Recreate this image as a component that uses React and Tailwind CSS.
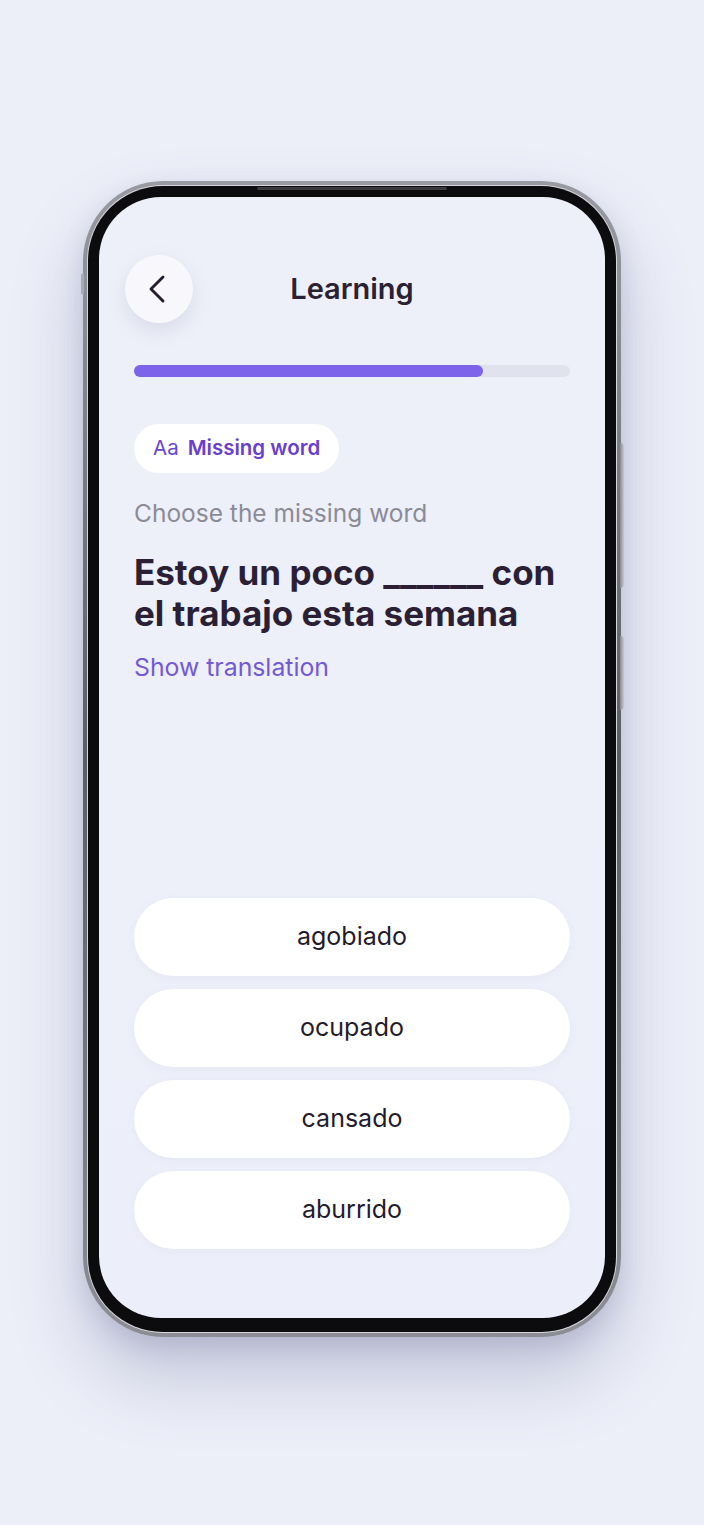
import React from 'react';
import { ChevronLeft } from 'lucide-react';

const options = ['agobiado', 'ocupado', 'cansado', 'aburrido'];

const progress = 80;

const App = () => {
  return (
    <div
      className="min-h-screen w-full bg-[#eceef8] pt-[181px] pb-[188px] flex justify-center"
      style={{ fontFamily: 'Inter, "Noto Sans", sans-serif' }}
    >
      <div className="relative">
        {/* side buttons */}
        <div className="absolute left-[-2px] top-[92px] w-[3px] h-[22px] rounded-l bg-[#a9a9b2]" />
        <div className="absolute right-[-3px] top-[262px] w-[4px] h-[145px] rounded-r bg-gradient-to-r from-[#8a8a92] to-[#c9c9d0]" />
        <div className="absolute right-[-3px] top-[455px] w-[4px] h-[74px] rounded-r bg-gradient-to-r from-[#8a8a92] to-[#c9c9d0]" />

        {/* Phone frame */}
        <div className="w-[538px] h-[1156px] rounded-[80px] p-[4px] bg-gradient-to-b from-[#9a9aa2] via-[#5c5c63] to-[#8d8d95] shadow-[0_40px_70px_rgba(90,95,140,0.28),0_10px_25px_rgba(90,95,140,0.18)]">
          <div className="w-full h-full rounded-[76px] p-[1px] bg-[#d6d6dc]">
            <div className="relative w-full h-full rounded-[75px] bg-[#0c0c0e] pt-[11px] px-[11px] pb-[14px]">
              <div className="absolute left-1/2 -translate-x-1/2 top-[1px] w-[190px] h-[3px] rounded-full bg-[#3a3a40]" />
              {/* Screen */}
              <div className="w-full h-full rounded-[62px] bg-gradient-to-b from-[#eef0f9] to-[#eceef9] flex flex-col px-[35px] pb-[69px] overflow-hidden">
                {/* Header */}
                <div className="relative mt-[58px] h-[68px] flex items-center justify-center">
                  <button className="absolute left-[-9px] top-0 w-[68px] h-[68px] rounded-full bg-[#f8f8fc] shadow-[0_8px_20px_rgba(100,100,140,0.15)] flex items-center justify-center">
                    <ChevronLeft size={48} strokeWidth={1.45} color="#261d2e" className="-ml-[4px]" />
                  </button>
                  <h1 className="text-[29px] font-semibold text-[#2b2134]">Learning</h1>
                </div>

                {/* Progress */}
                <div className="mt-[42px] h-[12px] w-full rounded-full bg-[#e0e2ee]">
                  <div className="h-full rounded-full bg-[#7c63e9]" style={{ width: `${progress}%` }} />
                </div>

                {/* Chip */}
                <div className="mt-[47px] self-start h-[49px] px-[19px] rounded-full bg-white flex items-center gap-[9px]">
                  <span className="text-[20.5px] text-[#6a45d0]">Aa</span>
                  <span className="text-[20.5px] font-semibold text-[#6a3fcf]">Missing word</span>
                </div>

                <p className="mt-[24px] text-[24.5px] leading-[32px] text-[#8b8b96]">Choose the missing word</p>

                <h2 className="mt-[23px] text-[35px] leading-[41px] font-bold text-[#2b1f36]">
                  Estoy un poco ______ con el trabajo esta semana
                </h2>

                <p className="mt-[17px] text-[24.8px] leading-[32px] text-[#7459d6]">Show translation</p>

                {/* Options */}
                <div className="mt-auto flex flex-col gap-[13px]">
                  {options.map((o) => (
                    <button
                      key={o}
                      className="h-[78px] w-full rounded-full bg-white text-[25px] text-[#241b2c] shadow-[0_2px_8px_rgba(120,120,160,0.06)]"
                    >
                      {o}
                    </button>
                  ))}
                </div>
              </div>
            </div>
          </div>
        </div>
      </div>
    </div>
  );
};

export default App;
